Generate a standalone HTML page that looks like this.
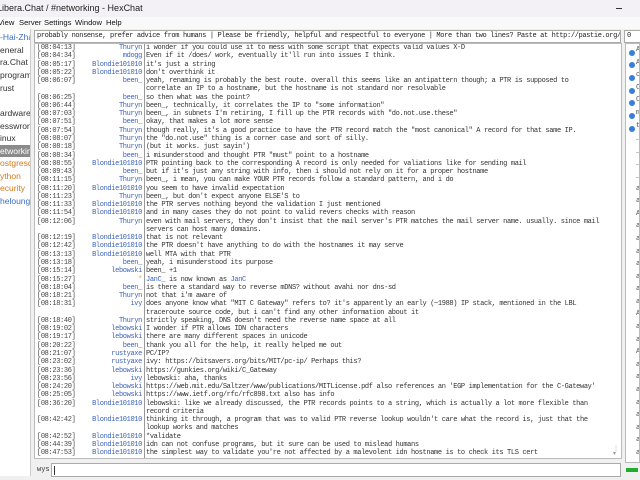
<!DOCTYPE html>
<html><head><meta charset="utf-8"><style>
*{margin:0;padding:0;box-sizing:border-box}
body{width:640px;height:480px;overflow:hidden;background:#f0f0f0;font-family:"Liberation Sans",sans-serif;position:relative}
.abs{position:absolute}
#title{left:0;top:0;width:640px;height:17px;background:#f3f1f5;font-size:9px;color:#222;line-height:17px;overflow:hidden}
#menu{left:0;top:17px;width:640px;height:12px;background:#f9f9f9;font-size:7.6px;line-height:12px;color:#111;overflow:hidden}
.mi{position:absolute;top:0}
#tree{left:0;top:29px;width:31px;height:447px;background:#fff;border-right:1px solid #ccc;overflow:hidden;font-size:8.5px}
#tree div{position:absolute;left:0;height:12px;line-height:12px;white-space:nowrap;color:#333}
#topic{left:34px;top:30px;width:587px;height:13px;background:#fff;border:1px solid #aaa;font-family:"Liberation Mono",monospace;font-size:7px;letter-spacing:-0.36px;line-height:11px;padding-left:2px;white-space:nowrap;overflow:hidden;color:#222}
#ops{left:624px;top:30px;width:20px;height:13px;background:#fff;border:1px solid #aaa;font-size:7px;line-height:11px;padding-left:2px;font-family:"Liberation Mono",monospace;color:#222}
#chat{left:34px;top:43px;width:588px;height:416px;background:#fff;border:1px solid #bbb;overflow:hidden}
#sep{left:144px;top:44px;width:1px;height:414px;background:#999}
#lines{left:0;top:44px;width:612px;height:414px;overflow:hidden}
.r{position:absolute;left:0;width:612px;height:8.27px;font-family:"Liberation Mono",monospace;font-size:7px;letter-spacing:-0.36px;line-height:8.27px;white-space:nowrap;color:#333}
.ts{position:absolute;left:37px;color:#444}
.nk{position:absolute;left:60px;width:82px;text-align:right}
.tx{position:absolute;left:146px}
.b{color:#3d63b8}
#users{left:625px;top:43px;width:15px;height:420px;background:#fff;border:1px solid #bbb;overflow:hidden}
.dot{position:absolute;left:3px;width:6px;height:6px;border-radius:50%;background:#3b7ddd}
#input{left:51px;top:463px;width:570px;height:14px;background:#fff;border:1px solid #aaa}
</style></head><body>
<div id="title" class="abs"><span style="position:absolute;left:-3px;top:0;white-space:nowrap">Libera.Chat / #networking - HexChat</span><span style="position:absolute;left:616px;top:8px;width:6px;height:1px;background:#333"></span></div>
<div id="menu" class="abs"><span class="mi" style="left:-2px">View</span><span class="mi" style="left:19px">Server</span><span class="mi" style="left:44px">Settings</span><span class="mi" style="left:75px">Window</span><span class="mi" style="left:106px">Help</span></div>
<div id="tree" class="abs">
<div style="top:2px;color:#3a6fc4">-Hai-Zhao</div>
<div style="top:15px">eneral</div>
<div style="top:27px">ra.Chat</div>
<div style="top:40px">programming</div>
<div style="top:53px">rust</div>
<div style="top:78px">ardware</div>
<div style="top:91px">esswrong</div>
<div style="top:103px">inux</div>
<div style="top:116px;width:31px;background:#8a8a8a;color:#fff">etworking</div>
<div style="top:128px;color:#d07a1a">ostgresql</div>
<div style="top:141px;color:#d07a1a">ython</div>
<div style="top:153px;color:#d07a1a">ecurity</div>
<div style="top:166px;color:#3a6fc4">helounge</div>
</div>
<div id="topic" class="abs">probably nonsense, prefer advice from humans | Please be friendly, helpful and respectful to everyone | More than two lines? Paste at http://pastie.org/</div>
<div id="ops" class="abs">0 op</div>
<div id="chat" class="abs"></div>
<div id="sep" class="abs"></div>
<div class="abs" style="left:613px;top:447px;width:6px;height:10px;font-size:6px;color:#999;line-height:5px">⋮<br>▾</div>
<div id="lines" class="abs">
<div class="r" style="top:0px"><span class="ts">[08:04:13]</span><span class="nk b">Thuryn</span><span class="tx">i wonder if you could use it to mess with some script that expects valid values X-D</span></div>
<div class="r" style="top:8.27px"><span class="ts">[08:04:34]</span><span class="nk b">mdogg</span><span class="tx">Even if it /does/ work, eventually it'll run into issues I think.</span></div>
<div class="r" style="top:16.54px"><span class="ts">[08:05:17]</span><span class="nk b">Blondie101010</span><span class="tx">it's just a string</span></div>
<div class="r" style="top:24.81px"><span class="ts">[08:05:22]</span><span class="nk b">Blondie101010</span><span class="tx">don't overthink it</span></div>
<div class="r" style="top:33.08px"><span class="ts">[08:06:07]</span><span class="nk b">been_</span><span class="tx">yeah, renaming is probably the best route. overall this seems like an antipattern though; a PTR is supposed to</span></div>
<div class="r" style="top:41.35px"><span class="tx">correlate an IP to a hostname, but the hostname is not standard nor resolvable</span></div>
<div class="r" style="top:49.62px"><span class="ts">[08:06:25]</span><span class="nk b">been_</span><span class="tx">so then what was the point?</span></div>
<div class="r" style="top:57.89px"><span class="ts">[08:06:44]</span><span class="nk b">Thuryn</span><span class="tx">been_, technically, it correlates the IP to "some information"</span></div>
<div class="r" style="top:66.16px"><span class="ts">[08:07:03]</span><span class="nk b">Thuryn</span><span class="tx">been_, in subnets I'm retiring, I fill up the PTR records with "do.not.use.these"</span></div>
<div class="r" style="top:74.43px"><span class="ts">[08:07:51]</span><span class="nk b">been_</span><span class="tx">okay, that makes a lot more sense</span></div>
<div class="r" style="top:82.7px"><span class="ts">[08:07:54]</span><span class="nk b">Thuryn</span><span class="tx">though really, it's a good practice to have the PTR record match the "most canonical" A record for that same IP.</span></div>
<div class="r" style="top:90.97px"><span class="ts">[08:08:07]</span><span class="nk b">Thuryn</span><span class="tx">the "do.not.use" thing is a corner case and sort of silly.</span></div>
<div class="r" style="top:99.24px"><span class="ts">[08:08:18]</span><span class="nk b">Thuryn</span><span class="tx">(but it works.  just sayin')</span></div>
<div class="r" style="top:107.51px"><span class="ts">[08:08:34]</span><span class="nk b">been_</span><span class="tx">i misunderstood and thought PTR "must" point to a hostname</span></div>
<div class="r" style="top:115.78px"><span class="ts">[08:08:55]</span><span class="nk b">Blondie101010</span><span class="tx">PTR pointing back to the corresponding A record is only needed for valiations like for sending mail</span></div>
<div class="r" style="top:124.05px"><span class="ts">[08:09:43]</span><span class="nk b">been_</span><span class="tx">but if it's just any string with info, then i should not rely on it for a proper hostname</span></div>
<div class="r" style="top:132.32px"><span class="ts">[08:11:15]</span><span class="nk b">Thuryn</span><span class="tx">been_, i mean, you can make YOUR PTR records follow a standard pattern, and i do</span></div>
<div class="r" style="top:140.59px"><span class="ts">[08:11:20]</span><span class="nk b">Blondie101010</span><span class="tx">you seem to have invalid expectation</span></div>
<div class="r" style="top:148.86px"><span class="ts">[08:11:23]</span><span class="nk b">Thuryn</span><span class="tx">been_, but don't expect anyone ELSE'S to</span></div>
<div class="r" style="top:157.13px"><span class="ts">[08:11:33]</span><span class="nk b">Blondie101010</span><span class="tx">the PTR serves nothing beyond the validation I just mentioned</span></div>
<div class="r" style="top:165.4px"><span class="ts">[08:11:54]</span><span class="nk b">Blondie101010</span><span class="tx">and in many cases they do not point to valid revers checks with reason</span></div>
<div class="r" style="top:173.67px"><span class="ts">[08:12:06]</span><span class="nk b">Thuryn</span><span class="tx">even with mail servers, they don't insist that the mail server's PTR matches the mail server name. usually.  since mail</span></div>
<div class="r" style="top:181.94px"><span class="tx">servers can host many domains.</span></div>
<div class="r" style="top:190.21px"><span class="ts">[08:12:19]</span><span class="nk b">Blondie101010</span><span class="tx">that is not relevant</span></div>
<div class="r" style="top:198.48px"><span class="ts">[08:12:42]</span><span class="nk b">Blondie101010</span><span class="tx">the PTR doesn't have anything to do with the hostnames it may serve</span></div>
<div class="r" style="top:206.75px"><span class="ts">[08:13:13]</span><span class="nk b">Blondie101010</span><span class="tx">well MTA with that PTR</span></div>
<div class="r" style="top:215.02px"><span class="ts">[08:13:18]</span><span class="nk b">been_</span><span class="tx">yeah, i misunderstood its purpose</span></div>
<div class="r" style="top:223.29px"><span class="ts">[08:15:14]</span><span class="nk b">lebowski</span><span class="tx">been_ +1</span></div>
<div class="r" style="top:231.56px"><span class="ts">[08:15:27]</span><span class="nk" style="color:#d0a020">*</span><span class="tx"><span class="b">JanC_</span> is now known as <span class="b">JanC</span></span></div>
<div class="r" style="top:239.83px"><span class="ts">[08:18:04]</span><span class="nk b">been_</span><span class="tx">is there a standard way to reverse mDNS? without avahi nor dns-sd</span></div>
<div class="r" style="top:248.1px"><span class="ts">[08:18:21]</span><span class="nk b">Thuryn</span><span class="tx">not that i'm aware of</span></div>
<div class="r" style="top:256.37px"><span class="ts">[08:18:31]</span><span class="nk b">ivy</span><span class="tx">does anyone know what "MIT C Gateway" refers to?  it's apparently an early (~1988) IP stack, mentioned in the LBL</span></div>
<div class="r" style="top:264.64px"><span class="tx">traceroute source code, but i can't find any other information about it</span></div>
<div class="r" style="top:272.91px"><span class="ts">[08:18:40]</span><span class="nk b">Thuryn</span><span class="tx">strictly speaking, DNS doesn't need the reverse name space at all</span></div>
<div class="r" style="top:281.18px"><span class="ts">[08:19:02]</span><span class="nk b">lebowski</span><span class="tx">I wonder if PTR allows IDN characters</span></div>
<div class="r" style="top:289.45px"><span class="ts">[08:19:17]</span><span class="nk b">lebowski</span><span class="tx">there are many different spaces in unicode</span></div>
<div class="r" style="top:297.72px"><span class="ts">[08:20:22]</span><span class="nk b">been_</span><span class="tx">thank you all for the help, it really helped me out</span></div>
<div class="r" style="top:305.99px"><span class="ts">[08:21:07]</span><span class="nk b">rustyaxe</span><span class="tx">PC/IP?</span></div>
<div class="r" style="top:314.26px"><span class="ts">[08:23:02]</span><span class="nk b">rustyaxe</span><span class="tx">ivy: https://bitsavers.org/bits/MIT/pc-ip/ Perhaps this?</span></div>
<div class="r" style="top:322.53px"><span class="ts">[08:23:36]</span><span class="nk b">lebowski</span><span class="tx">https://gunkies.org/wiki/C_Gateway</span></div>
<div class="r" style="top:330.8px"><span class="ts">[08:23:56]</span><span class="nk b">ivy</span><span class="tx">lebowski: aha, thanks</span></div>
<div class="r" style="top:339.07px"><span class="ts">[08:24:20]</span><span class="nk b">lebowski</span><span class="tx">https://web.mit.edu/Saltzer/www/publications/MITLicense.pdf also references an 'EGP implementation for the C-Gateway'</span></div>
<div class="r" style="top:347.34px"><span class="ts">[08:25:05]</span><span class="nk b">lebowski</span><span class="tx">https://www.ietf.org/rfc/rfc898.txt also has info</span></div>
<div class="r" style="top:355.61px"><span class="ts">[08:36:20]</span><span class="nk b">Blondie101010</span><span class="tx">lebowski:  like we already discussed, the PTR records points to a string, which is actually a lot more flexible than</span></div>
<div class="r" style="top:363.88px"><span class="tx">record criteria</span></div>
<div class="r" style="top:372.15px"><span class="ts">[08:42:42]</span><span class="nk b">Blondie101010</span><span class="tx">thinking it through, a program that was to valid PTR reverse lookup wouldn't care what the record is, just that the</span></div>
<div class="r" style="top:380.42px"><span class="tx">lookup works and matches</span></div>
<div class="r" style="top:388.69px"><span class="ts">[08:42:52]</span><span class="nk b">Blondie101010</span><span class="tx">*validate</span></div>
<div class="r" style="top:396.96px"><span class="ts">[08:44:39]</span><span class="nk b">Blondie101010</span><span class="tx">idn can not confuse programs, but it sure can be used to mislead humans</span></div>
<div class="r" style="top:405.23px"><span class="ts">[08:47:53]</span><span class="nk b">Blondie101010</span><span class="tx">the simplest way to validate you're not affected by a malevolent idn hostname is to check its TLS cert</span></div>
</div>
<div id="users" class="abs">
<div class="dot" style="top:6px"></div><div class="dot" style="top:18px"></div><div class="dot" style="top:31px"></div><div class="dot" style="top:44px"></div><div class="dot" style="top:56px"></div><div class="dot" style="top:69px"></div><div class="dot" style="top:82px"></div>
<div style="position:absolute;left:10px;top:0;font-size:7px;line-height:12.6px;color:#555;font-family:'Liberation Mono',monospace">A<br>A<br>c<br>C<br>C<br>m<br>t<br>_<br>_<br>_<br>_<br>a<br>a<br>A<br>a<br>a<br>a<br>a<br>a<br>a<br>a<br>A<br>a<br>a<br>A<br>a<br>a<br>a<br>a<br>a<br>a<br>a<br>a<br>a</div>
</div>
<div class="abs" style="left:37px;top:466px;font-family:'Liberation Mono',monospace;font-size:7px;color:#333">wys</div>
<div id="input" class="abs"><div style="position:absolute;left:2px;top:2px;width:1px;height:9px;background:#333"></div></div>
<div class="abs" style="left:626px;top:468px;width:12px;height:4px;background:#1fae2e"></div>
</body></html>
